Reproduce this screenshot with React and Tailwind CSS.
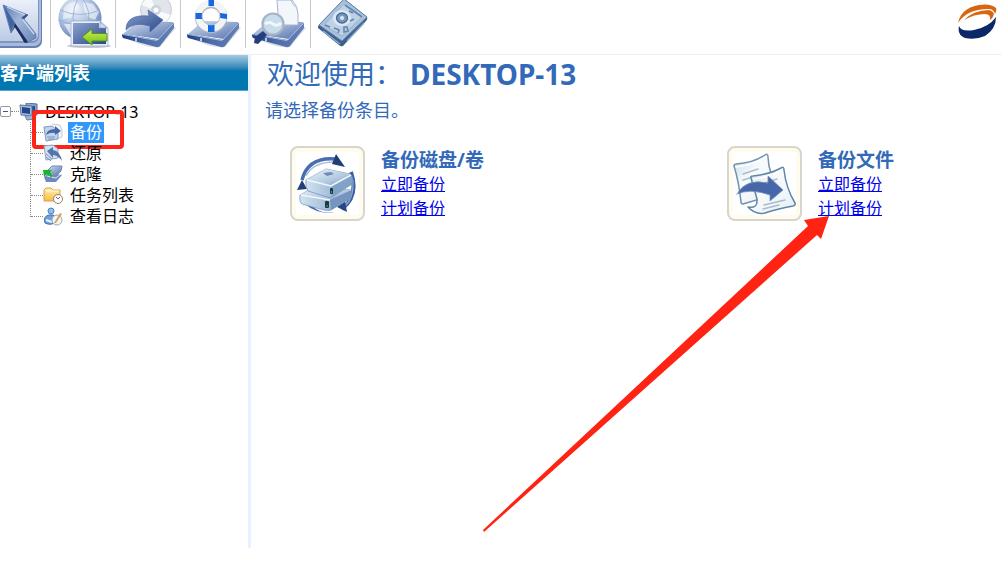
import React, { useState } from 'react';

const Gradients = () => (
  <svg className="absolute h-0 w-0" aria-hidden="true">
    <defs>
      <linearGradient id="steel" x1="0" y1="0" x2="1" y2="1">
        <stop offset="0" stopColor="#dce5f3" />
        <stop offset="0.5" stopColor="#93a9d0" />
        <stop offset="1" stopColor="#5470a9" />
      </linearGradient>
      <linearGradient id="navy" x1="0" y1="0" x2="1" y2="1">
        <stop offset="0" stopColor="#8ba3cf" />
        <stop offset="1" stopColor="#2b4788" />
      </linearGradient>
      <linearGradient id="pointer" x1="0" y1="0" x2="1" y2="1">
        <stop offset="0" stopColor="#5b79b3" />
        <stop offset="0.45" stopColor="#a3b7da" />
        <stop offset="1" stopColor="#6682b6" />
      </linearGradient>
      <linearGradient id="pane" x1="0" y1="0" x2="0" y2="1">
        <stop offset="0" stopColor="#f4f7fc" />
        <stop offset="1" stopColor="#bdcbe5" />
      </linearGradient>
      <linearGradient id="front" x1="0" y1="0" x2="1" y2="0">
        <stop offset="0" stopColor="#1f3e80" />
        <stop offset="0.45" stopColor="#4b6bab" />
        <stop offset="1" stopColor="#6580b5" />
      </linearGradient>
      <linearGradient id="lime" x1="0" y1="0" x2="0" y2="1">
        <stop offset="0" stopColor="#d3f04c" />
        <stop offset="1" stopColor="#6fbe1a" />
      </linearGradient>
      <radialGradient id="globe" cx="0.38" cy="0.3" r="0.75">
        <stop offset="0" stopColor="#eef4fc" />
        <stop offset="0.55" stopColor="#a9bfdf" />
        <stop offset="1" stopColor="#5877b0" />
      </radialGradient>
      <linearGradient id="caseTop" x1="0" y1="0" x2="1" y2="1">
        <stop offset="0" stopColor="#eef6fc" />
        <stop offset="0.6" stopColor="#b3cae1" />
        <stop offset="1" stopColor="#6f93bd" />
      </linearGradient>
      <linearGradient id="caseSide" x1="0" y1="0" x2="1" y2="0">
        <stop offset="0" stopColor="#d3e3f1" />
        <stop offset="0.6" stopColor="#9db9d6" />
        <stop offset="1" stopColor="#6286b4" />
      </linearGradient>
      <linearGradient id="paper" x1="0" y1="0" x2="1" y2="1">
        <stop offset="0" stopColor="#c5dae8" />
        <stop offset="0.4" stopColor="#f8fbfd" />
        <stop offset="1" stopColor="#e6eff5" />
      </linearGradient>
      <linearGradient id="folder" x1="0" y1="0" x2="0" y2="1">
        <stop offset="0" stopColor="#fff0b8" />
        <stop offset="1" stopColor="#f5bd45" />
      </linearGradient>
    </defs>
  </svg>
);

// Flat external drive, shared by three of the toolbar icons
const Drive = () => (
  <g>
    <path d="M8 37 Q30 49 44 47 L60 28 L55 24 L36 46 Z" fill="#9aa3b5" opacity="0.35" />
    <path d="M7 34 L21 22 Q23 20.500 26 21 L56 22 Q59 22.500 57 25 L43 39 Z" fill="url(#steel)" />
    <path d="M7 34 Q6 34 6 36 L7 38 L40 47 Q43 47.500 44 46 L58 28 L58 23 L42 40 Z" fill="url(#front)" />
    <path d="M7 34.500 L41 40.500 L57 24" fill="none" stroke="#b9c9e4" strokeWidth="0.800" />
    <path d="M20 38 V41.500" stroke="#dff0ff" strokeWidth="1.500" />
  </g>
);

const PointerIcon = () => (
  <svg width="50" height="48" viewBox="0 0 50 48">
    <rect x="-8" y="-8" width="50" height="56" rx="7" fill="#6580b3" />
    <rect x="-8" y="-8" width="49" height="54" rx="7" fill="#a9badb" />
    <rect x="-8" y="-8" width="47" height="51" rx="6" fill="#7d96c5" />
    <rect x="-8" y="-8" width="46" height="49" rx="6" fill="url(#pane)" />
    <path d="M6 7 L11 33 L16 26 L24 42 L27 43 L19 24 Z" fill="#1a2c58" />
    <path d="M3 5 L28 15 L24 19 L36 34 L36 38 L27 43 L15 25 L11 33 Z" fill="url(#pointer)" stroke="#5b78ae" strokeWidth="0.800" />
    <path d="M4 6 L15 23 L11 32 Z" fill="#45639f" />
    <path d="M15 23 L28 42 L25 43 L14 26 Z" fill="#1c2f5e" />
    <path d="M26 14 L28 15 L24 19 L21 18 Z" fill="#38548f" />
    <path d="M7 7 L25 15 M23 20 L34 34" fill="none" stroke="#c9d6ec" strokeWidth="1.300" />
  </svg>
);

const GlobeIcon = () => (
  <svg width="64" height="48" viewBox="0 0 64 48">
    <ellipse cx="38" cy="46" rx="22" ry="2" fill="#c6cad2" />
    <circle cx="29" cy="18" r="21.500" fill="url(#globe)" />
    <path d="M13 8 Q20 0 26 3 L29 7 L23 11 L20 18 L12 19 Z M32 2 L42 4 L48 12 L44 20 L37 17 L33 10 Z M13 24 L21 24 L24 30 L20 36 Z" fill="#f2f6fb" opacity="0.650" />
    <path d="M9 10 Q29 19 49 10 M7 20 Q28 29 50 20 M28 -4 Q16 18 28 39 M30 -4 Q43 15 35 25" fill="none" stroke="#8ea5cb" strokeWidth="0.700" />
    <path d="M20 21 H49 L57 28 V46 H20 Z" fill="#e9eff9" stroke="#9aa9c6" strokeWidth="0.700" />
    <path d="M22 23 H48 V28 H55 V44 H22 Z" fill="url(#navy)" />
    <path d="M49 22 L56 28 H49 Z" fill="#d5def0" stroke="#7489b5" strokeWidth="0.600" />
    <path d="M31 37 L41 29 V33.500 H56 V41 H41 V45 Z" fill="url(#lime)" stroke="#4d8f20" strokeWidth="0.900" />
  </svg>
);

const DiscDriveIcon = () => (
  <svg width="64" height="48" viewBox="0 0 64 48">
    <circle cx="40" cy="10" r="15.500" fill="#e1e5eb" stroke="#c6ccd6" />
    <path d="M40 10 L25 5 L29 0 H36 Z M40 10 L55 15 L50 22 L44 24 Z" fill="#fff" opacity="0.800" />
    <circle cx="40" cy="10" r="5" fill="#cbd2dd" />
    <circle cx="40" cy="10" r="2.500" fill="#fff" />
    <Drive />
    <path d="M10 30 Q10 14 33 16 L32 10 L47 20 L34 32 L34 26 Q18 21 10 30 Z" fill="url(#navy)" stroke="#4864a0" strokeWidth="0.700" />
  </svg>
);

const LifebuoyIcon = () => (
  <svg width="64" height="48" viewBox="0 0 64 48">
    <Drive />
    <circle cx="30" cy="17" r="12.500" fill="none" stroke="#aeb6c2" strokeWidth="7.500" />
    <circle cx="30" cy="16" r="12.500" fill="none" stroke="#f2f4f6" strokeWidth="6.500" />
    <path d="M27.500 0 H33 V6 H27.500 Z M27 25 H33.500 V32 H27 Z M14.500 13 H21 V19 H14.500 Z M39 13 L46 14 V19 L39 18 Z" fill="#1769dd" />
    <circle cx="30" cy="16" r="9" fill="none" stroke="#b4bac4" strokeWidth="0.800" />
  </svg>
);

const SearchDriveIcon = () => (
  <svg width="64" height="48" viewBox="0 0 64 48">
    <Drive />
    <path d="M31 0 H46 Q52 6 52 14 V25 H33 Z" fill="#f3f6fb" stroke="#a6b5d1" strokeWidth="1" />
    <path d="M45 0 Q46 5 51 8" fill="none" stroke="#b8c4da" />
    <path d="M17 31 L9 37 L8 43 L12 44 L21 35 Z" fill="#243f7e" />
    <circle cx="27" cy="24" r="10.500" fill="#c8dcec" stroke="#a8b3c3" strokeWidth="2.200" />
    <path d="M19 24 Q23 21 27 24 T35 23" fill="none" stroke="#eff7fc" strokeWidth="3" />
  </svg>
);

const ChipIcon = () => (
  <svg width="64" height="48" viewBox="0 0 64 48">
    <path d="M7 26 L32 0 Q34 -1 36 1 L56 17 Q57 19 55 21 L32 46 Q30 47 28 45 L7 28 Z" fill="#3e608f" />
    <path d="M8 25 L33 -1 L56 17 L31 41 Z" fill="#a9c1da" stroke="#5f80a8" strokeWidth="1" />
    <path d="M13 25 L33 4 L51 17 L31 36 Z" fill="#bed1e5" stroke="#8fabca" strokeWidth="0.700" />
    <ellipse cx="31" cy="18" rx="9" ry="8" fill="#dce8f3" />
    <ellipse cx="31" cy="18" rx="5.500" ry="5" fill="#7997bb" stroke="#446a98" strokeWidth="1.300" />
    <circle cx="31" cy="18" r="2" fill="#dce8f3" />
    <path d="M34 5 L51 17 M23 28 L28 30 L27 33 M33 27 L36 27 L37 31 L33 32 Z M38 11 L42 13 M39 21 L43 19 M14 25 L19 27" fill="none" stroke="#6485ad" strokeWidth="1.600" />
    <path d="M12 31 L29 44 M36 41 L53 23" stroke="#8caacd" strokeWidth="1.500" />
  </svg>
);

const Logo = () => (
  <svg width="40" height="36" viewBox="0 0 40 36" role="img" aria-label="logo">
    <path d="M0 19 Q3 4 21 1 Q33 -1 38 4 Q39 6 37 10 Q36 5 30 5 Q9 5 0 19 Z" fill="#d8650f" />
    <path d="M6 16 Q16 6 31 6 Q35 7 36 10 Q35 14 32 16 Q33 10 27 10 Q16 10 6 16 Z" fill="#d8650f" />
    <path d="M1 22 Q3 28 16 26 Q31 23 38 13 Q38 25 27 32 Q18 36 7 34 Q-1 31 1 22 Z" fill="#0b2767" />
  </svg>
);

const ComputerIcon = () => (
  <svg width="20" height="18" viewBox="0 0 20 18">
    <path d="M7 0 L18 1 V12 L8 12 Z" fill="#8ba5cb" stroke="#526f9e" />
    <path d="M9 3 H16 V10 H9 Z" fill="#274b8b" />
    <path d="M1 2 L13 3 V13 L2 12 Z" fill="#a9bddb" stroke="#5875a4" />
    <path d="M3 4 L11 5 V11 L3 10 Z" fill="#24468a" />
    <path d="M6 13 L14 12 L16 16 L8 17 Z" fill="#9cb2d2" stroke="#647faa" />
  </svg>
);

const BackupIcon = () => (
  <svg width="20" height="19" viewBox="0 0 20 19">
    <path d="M9 1 L17 2 L19 7 V14 L13 16" fill="#f3f6fa" stroke="#c2cbd8" />
    <path d="M1 4 L9 3 L15 8 V16 L3 18 Z" fill="#c4d4e8" stroke="#8099bd" />
    <path d="M3 12 Q4 6 12 6 V3 L18 8 L12 12 V10 Q7 9 3 12 Z" fill="#4568a8" />
    <path d="M4 14 H12 M5 16 H11" stroke="#7896bf" />
  </svg>
);

const RestoreIcon = () => (
  <svg width="20" height="19" viewBox="0 0 20 19">
    <path d="M1 2 L10 1 L15 5 V14 L3 16 Z" fill="#d5e0ee" stroke="#8da4c4" />
    <path d="M4 7 L10 3 V6 Q17 7 19 17 Q15 11 10 11 V14 Z" fill="#5575ad" />
    <path d="M3 10 L9 15 M3 13 L8 17" stroke="#7090bb" />
  </svg>
);

const CloneIcon = () => (
  <svg width="20" height="19" viewBox="0 0 20 19">
    <path d="M1 12 L8 8 L19 10 L13 17 L3 17 Z" fill="#6d8abd" />
    <path d="M4 11 L13 13 L19 8" fill="none" stroke="#e3eaf5" />
    <path d="M3 7 L9 1 L19 1 L18 6 L13 11 L3 10 Z" fill="url(#steel)" stroke="#6c88b9" />
    <path d="M0 5 L9 5 L7 7 Q10 10 8 13 Q7 10 4 9 L1 12 Z" fill="#12b928" />
  </svg>
);

const TaskIcon = () => (
  <svg width="20" height="19" viewBox="0 0 20 19">
    <path d="M1 4 L3 2 H8 L10 4 H17 V15 H1 Z" fill="url(#folder)" stroke="#dda13b" />
    <path d="M3 5 H16" stroke="#fff8dc" />
    <circle cx="15" cy="13" r="4.500" fill="#fff" stroke="#8d8172" />
    <path d="M13 11 L15 13 L17 11" fill="none" stroke="#766b60" />
  </svg>
);

const LogIcon = () => (
  <svg width="20" height="19" viewBox="0 0 20 19">
    <circle cx="8" cy="4" r="3" fill="#94bce7" stroke="#4b80bd" />
    <path d="M2 16 Q0 9 6 8 L10 8 Q13 9 13 15 Q8 19 2 16 Z" fill="#6ea1da" stroke="#3e71b1" />
    <path d="M3 13 L9 15" stroke="#eff6fe" strokeWidth="2" />
    <circle cx="14" cy="13" r="5" fill="#f3f4f6" stroke="#a3a8b1" />
    <path d="M11 16 L17 6 L19 7 L13 16 Z" fill="#d7a25b" />
  </svg>
);

const DiskArt = () => (
  <svg width="63" height="63" viewBox="0 0 63 63">
    <path d="M6 28 Q12 5 39 7" fill="none" stroke="#4a6dad" strokeWidth="3.500" />
    <path d="M10 24 Q17 10 38 10" fill="none" stroke="#a8c0df" strokeWidth="1.500" />
    <path d="M40 2 L49 15 L36 12 Z" fill="#203e78" />
    <path d="M55 20 Q63 44 46 57" fill="none" stroke="#3c60a3" strokeWidth="4" />
    <path d="M57 28 Q58 46 49 54" fill="none" stroke="#91afd5" strokeWidth="1.200" />
    <path d="M41 55 L49 49 L51 60 Z" fill="#29477f" />
    <path d="M8 40 Q10 54 27 60 L39 61 Q20 62 9 52 Z" fill="#486aaa" />
    <path d="M1 38 L6 28 L11 37 Z" fill="#233f79" />
    <path d="M4 43 L18 35 L55 38 V46 L35 58 Q32 59 28 58 L6 52 Q3 50 4 43 Z" fill="url(#caseSide)" stroke="#7d9ac0" strokeWidth="0.800" />
    <path d="M4 43 L19 35 L56 38 L34 48 Z" fill="url(#caseTop)" />
    <path d="M34 48 L54 39 Q56 42 54 47 L35 58 Z" fill="#7595be" />
    <path d="M10 28 L30 17 L54 22 Q58 25 56 32 L36 45 Q32 46 28 44 L12 39 Q9 35 10 28 Z" fill="url(#caseSide)" stroke="#7794ba" strokeWidth="0.800" />
    <path d="M10 28 L30 17 L55 22 L35 34 Z" fill="url(#caseTop)" />
    <path d="M35 34 L55 23 Q58 27 55 33 L36 45 Z" fill="#83a2c8" />
    <path d="M27 21 L35 20 L38 22 L31 24 Z" fill="#6d8cb6" />
    <path d="M11 28 L35 34 L55 23 M5 43 L34 48" fill="none" stroke="#eff7fe" strokeWidth="1.500" />
    <rect x="34" y="36" width="3" height="6" rx="1" fill="#173b3f" />
    <rect x="29" y="49" width="4" height="7" rx="1" fill="#173b3f" />
    <path d="M35.500 39 V41 M31 53 V55" stroke="#3ca16d" />
  </svg>
);

const FileArt = () => (
  <svg width="63" height="63" viewBox="0 0 63 63" strokeLinejoin="round" strokeLinecap="round">
    <path d="M1 14 Q1 12 3 12 Q20 11 32 3 Q35 1 35 5 L36 14 L44 42 L10 52 Q8 52 8 50 Q6 30 1 14 Z" fill="url(#paper)" stroke="#6f93b0" strokeWidth="1.500" />
    <path d="M3 15 Q20 13 33 5" fill="none" stroke="#fff" strokeWidth="1.500" />
    <path d="M10 22 L25 17 M10 28 L20 25" stroke="#a9bccb" strokeWidth="1.500" />
    <path d="M18 26 Q17 24 20 24 Q37 22 48 16 Q51 14 51 18 Q53 36 62 51 Q63 53 60 54 Q44 57 32 61 Q22 63 15 55 Q25 57 24 47 Z" fill="url(#paper)" stroke="#5f86a8" strokeWidth="1.500" />
    <path d="M21 27 Q37 25 49 18" fill="none" stroke="#fff" strokeWidth="1.500" />
    <path d="M28 32 L44 27 M31 53 L52 48 M30 57 L46 53" stroke="#a9bccb" strokeWidth="1.500" />
    <path d="M4 42 Q13 26 35 31 L35 24 L50 38 L37 49 L37 43 Q17 36 4 42 Z" fill="#4767a8" stroke="#7590c2" strokeWidth="0.800" />
  </svg>
);

const tools = [
  { label: '客户端', Icon: PointerIcon },
  { label: '连接', Icon: GlobeIcon },
  { label: '备份还原', Icon: DiscDriveIcon },
  { label: '救援', Icon: LifebuoyIcon },
  { label: '浏览', Icon: SearchDriveIcon },
  { label: '磁盘', Icon: ChipIcon },
];

const treeItems = [
  { label: '备份', Icon: BackupIcon },
  { label: '还原', Icon: RestoreIcon },
  { label: '克隆', Icon: CloneIcon },
  { label: '任务列表', Icon: TaskIcon },
  { label: '查看日志', Icon: LogIcon },
];

const RedArrow = () => (
  <svg className="pointer-events-none absolute top-[69px] -left-[245px]" width="350" height="320" viewBox="0 0 350 320" aria-hidden="true">
    <path d="M347 1 L339 24 L335 20 L2 317 L1 315 L326 11 L322 5 Z" fill="#ff2313" />
  </svg>
);

const BackupCard = ({ title, Art, children }) => (
  <section className="relative flex gap-4">
    <div className="flex h-[75px] w-[75px] shrink-0 items-center justify-center rounded-lg border-2 border-[#d8d5ce] bg-[#fffbed]">
      <div className="bg-white">
        <Art />
      </div>
    </div>
    <div className="flex flex-col items-start pt-0.5 whitespace-nowrap">
      <h2 className="text-[19px] leading-6 font-bold text-[#3269b8]">{title}</h2>
      <a href="#now" className="text-base leading-6 text-[#0000ee] underline">立即备份</a>
      <a href="#plan" className="text-base leading-6 text-[#0000ee] underline">计划备份</a>
    </div>
    {children}
  </section>
);

const Sidebar = () => {
  const [selected, setSelected] = useState('备份');
  const [open, setOpen] = useState(true);

  return (
    <aside className="w-[251px] shrink-0 border-r-3 border-[#e5f2ff]">
      <h2 className="h-9 border-b border-[#55a2cb] bg-linear-to-b from-[#a2cce2] from-0% via-[#0077b0] via-45% to-[#0077b0] text-lg leading-9 font-bold text-white">
        客户端列表
      </h2>
      <div className="pt-2.5 text-base text-black">
        <div className="flex h-[21px] items-center">
          <button
            onClick={() => setOpen(!open)}
            aria-label="展开"
            className="flex h-[11px] w-[11px] items-center justify-center rounded-xs border border-[#999]"
          >
            <span className="h-px w-[5px] bg-[#3959a6]" />
          </button>
          <span className="w-2 border-t border-dotted border-[#888]" />
          <ComputerIcon />
          <span className="ml-1.5">DESKTOP-13</span>
        </div>
        {open && (
          <ul className="ml-[30px]">
            {treeItems.map(({ label, Icon }, i) => (
              <li key={label} className="relative flex h-[21px] items-center">
                <span className={`border-l border-dotted border-[#888] ${i === treeItems.length - 1 ? 'h-[11px] self-start' : 'h-full'}`} />
                <span className="w-3 border-t border-dotted border-[#888]" />
                <Icon />
                <button
                  onClick={() => setSelected(label)}
                  className={`ml-[5px] h-[21px] px-0.5 leading-[21px] ${selected === label ? 'bg-[#3297fd] text-white' : ''}`}
                >
                  {label}
                </button>
                {i === 0 && (
                  <span className="pointer-events-none absolute -top-3 left-0.5 h-[39px] w-[92px] rounded-sm border-4 border-[#ff2419]" />
                )}
              </li>
            ))}
          </ul>
        )}
      </div>
    </aside>
  );
};

const App = () => {
  return (
    <div className="flex min-h-screen flex-col overflow-hidden bg-white pb-5 font-['Noto_Sans','Noto_Sans_CJK_SC',sans-serif]">
      <Gradients />
      <header className="flex h-[55px] items-start justify-between border-b border-[#efefef]">
        <nav className="flex">
          {tools.map(({ label, Icon }, i) => (
            <button
              key={label}
              aria-label={label}
              className={`flex h-12 items-start ${i < tools.length - 1 ? 'border-r border-[#c9c9c9]' : ''}`}
            >
              <Icon />
            </button>
          ))}
        </nav>
        <div className="pt-1 pr-1">
          <Logo />
        </div>
      </header>

      <div className="flex grow">
        <Sidebar />
        <main className="grow">
          <h1 className="mt-px ml-4 flex gap-2 text-[27px] leading-9 text-[#3269b8]">
            <span>欢迎使用：</span>
            <span className="text-[28px] font-bold">DESKTOP-13</span>
          </h1>
          <p className="ml-3.5 text-lg leading-9 text-[#3269b8]">请选择备份条目。</p>
          <div className="mt-[18px] grid grid-cols-[437fr_275fr] pl-[39px]">
            <BackupCard title="备份磁盘/卷" Art={DiskArt} />
            <BackupCard title="备份文件" Art={FileArt}>
              <RedArrow />
            </BackupCard>
          </div>
        </main>
      </div>
    </div>
  );
};

export default App;
